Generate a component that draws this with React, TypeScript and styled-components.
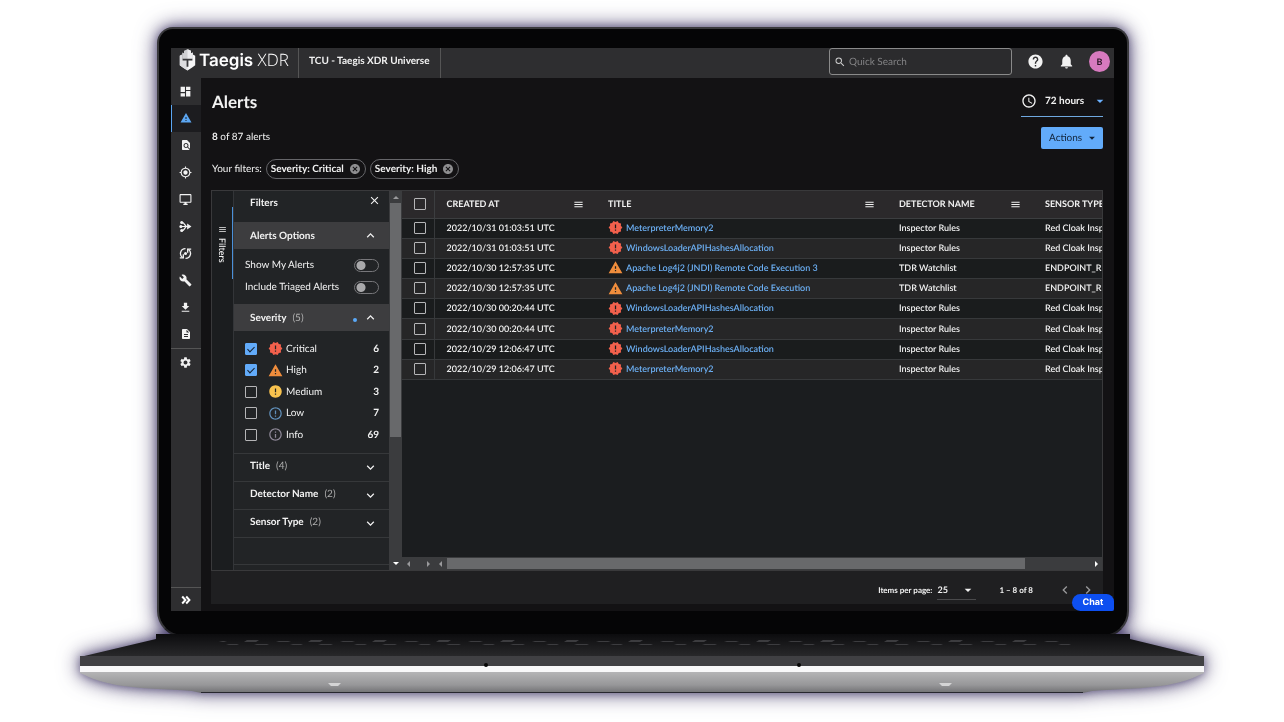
import React from 'react';
import styled, { createGlobalStyle, css } from 'styled-components';
import {
  MdDashboard, MdWarning, MdFindInPage, MdMyLocation, MdOutlineDesktopWindows, MdBuild,
  MdDescription, MdSettings, MdHelp, MdNotifications, MdSearch, MdAccessTime, MdArrowDropDown,
  MdCancel, MdNewReleases, MdError, MdErrorOutline, MdInfoOutline, MdClose, MdExpandLess,
  MdExpandMore, MdChevronLeft, MdChevronRight, MdFileDownload, MdMenu,
} from 'react-icons/md';

const Global = createGlobalStyle`
  * { box-sizing: border-box; }
  body {
    margin: 0;
    background: #fff;
    font-family: Lato, "Liberation Sans", sans-serif;
    text-rendering: geometricPrecision;
  }
  button, input, select { font-family: inherit; text-rendering: inherit; }
  button { border: 0; padding: 0; background: none; color: inherit; cursor: pointer; }
  svg { display: block; flex: none; }
`;

const Page = styled.main`padding: 27px 80px 28px;`;
const Laptop = styled.div`
  filter: drop-shadow(0 0 4px rgba(52, 42, 92, 0.5)) drop-shadow(0 0 10px rgba(52, 42, 92, 0.8));
`;
const Lid = styled.div`
  margin: 0 75px 0 77px;
  padding: 19px 13px 24px 12px;
  background: #050506;
  border: 2px solid #39393c;
  border-bottom-color: #232326;
  border-radius: 16px 16px 26px 26px;
`;
const Base = styled.svg`width: 100%; height: 59px; margin-top: -3px;`;
const Screen = styled.div`
  position: relative;
  display: flex;
  flex-direction: column;
  background: #131214;
  color: #f2f2f2;
  font-size: 10px;
  line-height: 14px;
`;

const TopBar = styled.header`
  display: flex;
  align-items: stretch;
  height: 30px;
  background: #2e2e30;
`;
const Brand = styled.a`
  display: flex;
  align-items: center;
  gap: 3px;
  width: 128px;
  padding: 0 0 6px 8px;
  border-right: 1px solid #555;
  color: #fff;
  text-decoration: none;
  font-size: 17px;
  font-weight: 600;
  font-family: Inter, sans-serif;
`;
const BrandThin = styled.span`font-weight: 300; font-family: "Open Sans", sans-serif;`;
const Tenant = styled.div`
  padding: 6px 10px;
  border-right: 1px solid #555;
  font-weight: 700;
`;
const SearchBox = styled.label`
  display: flex;
  align-items: center;
  gap: 3px;
  width: 183px;
  height: 27px;
  margin-left: auto;
  padding-left: 4px;
  border: 1px solid #8a8a8a;
  border-radius: 3px;
  color: #ccc;
  background: #2b2b2d;
`;
const SearchInput = styled.input`
  flex: 1;
  min-width: 0;
  border: 0;
  padding: 0;
  background: none;
  color: #eee;
  font-size: 10px;
  &::placeholder { color: #828284; opacity: 1; }
`;
const TopActions = styled.div`
  display: flex;
  align-items: center;
  gap: 14px;
  padding: 0 4px 3px 15px;
`;
const Avatar = styled.button`
  width: 21px;
  height: 21px;
  border-radius: 50%;
  background: #d77abf;
  color: #2a1525;
  font-size: 9px;
  font-weight: 700;
`;

const Body = styled.div`display: flex;`;
const Rail = styled.nav`
  display: flex;
  flex-direction: column;
  width: 30px;
  background: #2e2e30;
  color: #fff;
`;
const RailLink = styled.a<{ $active?: boolean }>`
  display: flex;
  align-items: center;
  justify-content: center;
  height: 27px;
  padding: 0 1px 1px 0;
  color: ${p => (p.$active ? '#5ba6f2' : '#f2f2f2')};
  ${p => p.$active && css`background: linear-gradient(90deg, #5ba6f2 1px, #1c1c1f 1px);`}
`;
const RailRule = styled.hr`width: 100%; margin: 0; border: 0; border-top: 1px solid #555;`;
const RailToggle = styled.button`
  display: flex;
  align-items: center;
  justify-content: center;
  height: 24px;
  margin-top: auto;
  border-top: 1px solid #555;
`;

const Content = styled.section`flex: 1; min-width: 0; padding: 0 11px 7px 10px;`;
const TitleRow = styled.div`display: flex; justify-content: space-between; height: 39px;`;
const Title = styled.h1`margin: 12px 0 0 1px; font-size: 17px; line-height: 24px;`;
const TimeRange = styled.button`
  display: flex;
  align-items: center;
  gap: 8px;
  width: 82px;
  padding: 8px 0 0;
  border-bottom: 1px solid #6fa8e0;
  font-size: 10px;
  font-weight: 700;
  white-space: nowrap;
  & > svg:last-child { margin-left: auto; color: #6bb1ff; }
`;
const CountRow = styled.div`
  display: flex;
  justify-content: space-between;
  align-items: flex-end;
  height: 32px;
  padding-left: 1px;
`;
const Count = styled.p`margin: 0; height: 19px;`;
const Actions = styled.button`
  display: flex;
  align-items: center;
  justify-content: space-between;
  width: 62px;
  height: 22px;
  padding: 0 4px 0 8px;
  border-radius: 2px;
  background: #62abfa;
  color: #12243a;
  font-size: 10px;
`;
const ChipRow = styled.div`
  display: flex;
  align-items: center;
  gap: 4px;
  height: 41px;
  padding: 0 0 2px 1px;
`;
const Chip = styled.span`
  display: flex;
  align-items: center;
  gap: 5px;
  height: 20px;
  padding: 0 4px;
  border: 1px solid #66666a;
  border-radius: 10px;
  font-weight: 700;
  button { color: #8e8e90; }
`;

const Panel = styled.div`
  display: flex;
  height: 381px;
  border: 1px solid #39393b;
  background: #1b1d1f;
`;
const SideTab = styled.button`
  display: flex;
  justify-content: flex-start;
  align-items: center;
  gap: 4px;
  writing-mode: vertical-rl;
  width: 22px;
  padding-top: 34px;
  border-right: 1px solid #333538;
  background: linear-gradient(#4a90d9, #4a90d9) right 16px / 1px 72px no-repeat;
  font-size: 9px;
  font-weight: 600;
`;
const Filters = styled.aside`width: 155px; background: #222426;`;
const FiltersHead = styled.div`
  display: flex;
  justify-content: space-between;
  height: 31px;
  padding: 5px 8px 0 16px;
  font-weight: 700;
  button { height: 10px; margin-top: -2px; }
`;
const Section = styled.button<{ $open?: boolean }>`
  display: flex;
  align-items: center;
  gap: 6px;
  width: 100%;
  height: ${p => (p.$open ? '27px' : '28px')};
  padding: 0 11px ${p => (p.$open ? '0' : '4px')} 16px;
  background: ${p => (p.$open ? '#3d3d3f' : '#222426')};
  border-top: ${p => (p.$open ? '0' : '1px solid #36383a')};
  font-size: 10px;
  font-weight: 700;
  & > svg { margin: ${p => (p.$open ? '0' : '4px')} 0 0 auto; }
`;
const Muted = styled.span`color: #b0b0b0; font-weight: 400;`;
const Dot = styled.i`
  width: 4px;
  height: 4px;
  margin: 5px 0 0 auto;
  border-radius: 50%;
  background: #5aa9f8;
  & + svg { margin-left: 0; }
`;
const Toggles = styled.div`height: 55px; padding: 5px 10px 0 11px;`;
const ToggleRow = styled.label`
  display: flex;
  align-items: center;
  justify-content: space-between;
  height: 22px;
`;
const Switch = styled.input`
  appearance: none;
  width: 25px;
  height: 13px;
  margin: 0;
  border: 1px solid #77777a;
  border-radius: 7px;
  background: radial-gradient(circle at 6px 50%, #a9a9ab 4px, transparent 5px);
`;
const SeverityList = styled.div`
  display: flex;
  flex-direction: column;
  justify-content: space-between;
  height: 122px;
  padding: 7px 10px 8px 11px;
`;
const SeverityRow = styled.label`
  display: flex;
  align-items: center;
  height: 21px;
  & > svg { margin: 0 3px 0 11px; }
  & > span { flex: 1; }
`;
const Check = styled.input`
  appearance: none;
  display: block;
  flex: none;
  width: 12px;
  height: 12px;
  margin: 0;
  border: 1px solid #b5b5b7;
  border-radius: 1px;
  &:checked {
    border-color: #62abfa;
    background: #62abfa;
  }
  &:checked::after {
    content: '';
    display: block;
    width: 3px;
    height: 6px;
    margin: 1px 0 0 3px;
    border: solid #14212f;
    border-width: 0 1px 1px 0;
    transform: rotate(45deg);
  }
`;
const EmptySection = styled.div`
  height: 28px;
  border: solid #36383a;
  border-width: 1px 0;
`;
const VScroll = styled.div`
  display: flex;
  flex-direction: column;
  align-items: center;
  width: 13px;
  padding: 5px 0;
  background: #3b3c3e;
`;
const VThumb = styled.div`width: 11px; height: 234px; margin: 4px 0 auto; background: #68696b;`;
const Arrow = styled.i<{ $dir: 'up' | 'down' | 'left' | 'right'; $dim?: boolean }>`
  border: 3px solid transparent;
  ${p => {
    const c = p.$dim ? '#9a9a9c' : '#fff';
    return {
      up: `border-top: 0; border-bottom-color: ${c};`,
      down: `border-bottom: 0; border-top-color: ${c};`,
      left: `border-left: 0; border-right-color: ${c};`,
      right: `border-right: 0; border-left-color: ${c};`,
    }[p.$dir];
  }}
`;

const Grid = styled.div`
  flex: 1;
  min-width: 0;
  display: flex;
  flex-direction: column;
  justify-content: space-between;
  overflow: hidden;
`;
const Table = styled.table`
  width: 100%;
  height: 189px;
  table-layout: fixed;
  border-collapse: collapse;
  text-align: left;
  white-space: nowrap;
  font-size: 9px;
`;
const Th = styled.th<{ $w?: number }>`
  width: ${p => (p.$w ? p.$w + 'px' : 'auto')};
  height: 27px;
  padding: 0 0 0 12px;
  background: #2b292b;
  border-bottom: 1px solid #3c3e40;
  font-weight: 700;
  overflow: hidden;
  &:first-child { border-right: 1px solid #3c3e40; }
`;
const ThInner = styled.div`
  display: flex;
  align-items: center;
  justify-content: space-between;
  padding-right: 12px;
`;
const Tr = styled.tr`
  background: #1a1c1d;
  &:nth-child(even) { background: #262627; }
`;
const Td = styled.td`
  padding: 0 0 1px 12px;
  border-bottom: 1px solid #37393b;
  overflow: hidden;
  font-weight: 600;
  &:first-child { border-right: 1px solid #37393b; }
`;
const AlertLink = styled.a`
  display: flex;
  align-items: center;
  gap: 3px;
  color: #6cb0f5;
  text-decoration: none;
`;
const HScroll = styled.div`
  display: flex;
  align-items: center;
  height: 13px;
  padding: 0 4px 0 5px;
  background: #3b3c3e;
`;
const HGap = styled.span<{ $w: number }>`width: ${p => p.$w}px;`;
const HTrack = styled.div`flex: 1; margin: 0 6px 0 5px;`;
const HThumb = styled.div`width: 90%; height: 11px; background: #68696b;`;

const Pager = styled.footer`
  display: flex;
  align-items: center;
  justify-content: flex-end;
  height: 33px;
  padding: 5px 7px 0 0;
  background: #1f1f21;
  font-size: 8px;
  font-weight: 700;
  & > label { margin-right: 5px; }
  button { color: #9a9a9c; margin-left: 7px; }
`;
const SelectWrap = styled.span`
  display: flex;
  align-items: center;
  width: 39px;
  height: 20px;
  margin-right: 23px;
  border-bottom: 1px solid #4a4a4c;
`;
const Select = styled.select`
  appearance: none;
  flex: 1;
  min-width: 0;
  border: 0;
  padding: 0;
  background: none;
  color: #f2f2f2;
  font-size: 9px;
  font-weight: 700;
`;
const Range = styled.span`margin-right: 17px;`;
const Chat = styled.button`
  position: absolute;
  right: 0;
  bottom: 0;
  width: 42px;
  height: 17px;
  border-radius: 9px 8px 2px 9px;
  background: #0d4ff0;
  color: #fff;
  font-family: Inter, sans-serif;
  font-size: 9px;
  font-weight: 700;
`;

function Helmet() {
  return (
    <svg width="17" height="22" viewBox="0 0 17 22" aria-hidden="true">
      <path d="M3.200 3.500 5 4.200V1.800L8.500.3 12 1.800v2.400l1.800-.7V10H3.200z" fill="#cfcfd2" />
      <path d="M8.500.3 12 1.800v2.400l1.800-.7V10H8.500z" fill="#ececee" />
      <path d="M.8 6.800 3.200 5.600V10h10.600V5.600l2.400 1.200v9.400l-3.400 2.500-4.300 2.900-4.300-2.900-3.400-2.500z" fill="#f6f6f7" />
      <path d="M.8 6.800 3.200 5.600V10h5.300v11.600l-4.300-2.900-3.400-2.500z" fill="#dcdcdf" />
      <path d="M3.600 9.800h9.800v1.700H9.400v6.300H7.600v-6.300h-4z" fill="#38383b" />
    </svg>
  );
}

function BranchIcon() {
  return (
    <svg width="13" height="13" viewBox="0 0 24 24" fill="currentColor" aria-hidden="true">
      <circle cx="5" cy="4.500" r="2.800" />
      <circle cx="3.500" cy="12" r="2.800" />
      <circle cx="5" cy="19.500" r="2.800" />
      <path d="M5 4.500c6 0 5 6.500 9 7.500-4 1-3 7.500-9 7.500M3.500 12H17" fill="none" stroke="currentColor" strokeWidth="2.200" />
      <path d="M15 6.500l8 5.500-8 5.500z" />
    </svg>
  );
}

function CycleIcon() {
  return (
    <svg width="13" height="13" viewBox="0 0 24 24" fill="none" stroke="currentColor" strokeWidth="2.400" aria-hidden="true">
      <path d="M6.500 19.300A9 9 0 0 1 12 3M17.500 4.700A9 9 0 0 1 12 21" />
      <path d="M1.500 20H8v-6.500M22.500 4H16v6.500" />
      <circle cx="12" cy="12" r="2.800" fill="currentColor" stroke="none" />
    </svg>
  );
}

function DoubleChevron() {
  return (
    <svg width="10" height="10" viewBox="0 0 10 10" fill="none" stroke="#fff" strokeWidth="2" aria-hidden="true">
      <path d="M1.200 1.500 4.400 5 1.200 8.500M5.200 1.500 8.400 5 5.200 8.500" />
    </svg>
  );
}

const railItems = [
  { label: 'Dashboard', icon: <MdDashboard size={13} /> },
  { label: 'Alerts', icon: <MdWarning size={12} />, active: true },
  { label: 'Search', icon: <MdFindInPage size={12} /> },
  { label: 'Detections', icon: <MdMyLocation size={13} /> },
  { label: 'Endpoints', icon: <MdOutlineDesktopWindows size={13} /> },
  { label: 'Integrations', icon: <BranchIcon /> },
  { label: 'Automations', icon: <CycleIcon /> },
  { label: 'Tools', icon: <MdBuild size={13} /> },
  { label: 'Downloads', icon: <MdFileDownload size={13} /> },
  { label: 'Reports', icon: <MdDescription size={12} /> },
];

const severities = [
  { name: 'Critical', count: 6, icon: <MdNewReleases size={15} color="#f2604c" />, on: true },
  { name: 'High', count: 2, icon: <MdWarning size={15} color="#f08d3c" />, on: true },
  { name: 'Medium', count: 3, icon: <MdError size={15} color="#f8c24e" /> },
  { name: 'Low', count: 7, icon: <MdErrorOutline size={15} color="#6190bb" /> },
  { name: 'Info', count: 69, icon: <MdInfoOutline size={15} color="#8d8796" /> },
];

type Alert = [string, string, boolean];
const alerts: Alert[] = [
  ['2022/10/31 01:03:51 UTC', 'MeterpreterMemory2', true],
  ['2022/10/31 01:03:51 UTC', 'WindowsLoaderAPIHashesAllocation', true],
  ['2022/10/30 12:57:35 UTC', 'Apache Log4j2 (JNDI) Remote Code Execution 3', false],
  ['2022/10/30 12:57:35 UTC', 'Apache Log4j2 (JNDI) Remote Code Execution', false],
  ['2022/10/30 00:20:44 UTC', 'WindowsLoaderAPIHashesAllocation', true],
  ['2022/10/30 00:20:44 UTC', 'MeterpreterMemory2', true],
  ['2022/10/29 12:06:47 UTC', 'WindowsLoaderAPIHashesAllocation', true],
  ['2022/10/29 12:06:47 UTC', 'MeterpreterMemory2', true],
];

function LaptopBase() {
  return (
    <Base viewBox="0 0 1124 59" preserveAspectRatio="none" aria-hidden="true">
      <defs>
        <linearGradient id="deck" x1="0" y1="0" x2="0" y2="1">
          <stop offset="0" stopColor="#0c0c0e" />
          <stop offset="1" stopColor="#29292b" />
        </linearGradient>
        <linearGradient id="belly" x1="0" y1="0" x2="0" y2="1">
          <stop offset="0" stopColor="#c2c2c3" />
          <stop offset="0.700" stopColor="#979799" />
          <stop offset="1" stopColor="#707073" />
        </linearGradient>
        <pattern id="keys" width="64" height="12" patternUnits="userSpaceOnUse">
          <path d="M4 8l3-1h12l-3 1zM18 11l3-1h10l-2 1zM36 8l3-2h12l-3 2zM46 11l3-1h12l-2 1z" fill="#3c3c3f" />
        </pattern>
      </defs>
      <path d="M76 0h974v5l74 18H0L76 5z" fill="url(#deck)" />
      <path d="M150 5h824l30 8H120z" fill="url(#keys)" />
      <path d="M0 22h1124v11H0z" fill="#404043" />
      <path d="M0 32h1124v7c-12 6-22 9-36 12-24 4-50 4-76 6l-9 2H121l-9-2c-26-2-52-2-76-6C22 48 12 45 0 39z" fill="url(#belly)" />
      <path d="M0 32h1124v6H0z" fill="#f8f8f9" />
      <path d="M121 58h882v1H121z" fill="#26262e" />
      <circle cx="406" cy="31" r="2" fill="#050505" />
      <circle cx="719" cy="31" r="2" fill="#050505" />
      <path d="M248 49h13l-3 3h-7zM859 49h13l-3 3h-7z" fill="#d4d4d5" />
    </Base>
  );
}

export default function App() {
  return (
    <>
      <Global />
      <Page>
        <Laptop>
          <Lid>
            <Screen>
              <TopBar>
                <Brand href="#"><Helmet /><span>Taegis <BrandThin>XDR</BrandThin></span></Brand>
                <Tenant>TCU - Taegis XDR Universe</Tenant>
                <SearchBox>
                  <MdSearch size={12} />
                  <SearchInput aria-label="Quick Search" placeholder="Quick Search" />
                </SearchBox>
                <TopActions>
                  <button aria-label="Help"><MdHelp size={17} /></button>
                  <button aria-label="Notifications"><MdNotifications size={17} /></button>
                  <Avatar>B</Avatar>
                </TopActions>
              </TopBar>
              <Body>
                <Rail>
                  {railItems.map(i => (
                    <RailLink key={i.label} href="#" aria-label={i.label} $active={i.active}>{i.icon}</RailLink>
                  ))}
                  <RailRule />
                  <RailLink href="#" aria-label="Settings"><MdSettings size={13} /></RailLink>
                  <RailToggle aria-label="Expand navigation"><DoubleChevron /></RailToggle>
                </Rail>
                <Content>
                  <TitleRow>
                    <Title>Alerts</Title>
                    <TimeRange><MdAccessTime size={16} />72 hours<MdArrowDropDown size={16} /></TimeRange>
                  </TitleRow>
                  <CountRow>
                    <Count><b>8</b> of 87 alerts</Count>
                    <Actions>Actions <MdArrowDropDown size={14} /></Actions>
                  </CountRow>
                  <ChipRow>
                    <span>Your filters:</span>
                    {['Critical', 'High'].map(s => (
                      <Chip key={s}>Severity: {s}<button aria-label={`Remove ${s}`}><MdCancel size={12} /></button></Chip>
                    ))}
                  </ChipRow>
                  <Panel>
                    <SideTab><MdMenu size={9} />Filters</SideTab>
                    <Filters>
                      <FiltersHead>Filters<button aria-label="Close filters"><MdClose size={13} /></button></FiltersHead>
                      <Section $open>Alerts Options<MdExpandLess size={15} /></Section>
                      <Toggles>
                        <ToggleRow>Show My Alerts<Switch type="checkbox" /></ToggleRow>
                        <ToggleRow>Include Triaged Alerts<Switch type="checkbox" /></ToggleRow>
                      </Toggles>
                      <Section $open>Severity <Muted>(5)</Muted><Dot /><MdExpandLess size={15} /></Section>
                      <SeverityList>
                        {severities.map(s => (
                          <SeverityRow key={s.name}>
                            <Check type="checkbox" defaultChecked={s.on} />
                            {s.icon}
                            <span>{s.name}</span>
                            <b>{s.count}</b>
                          </SeverityRow>
                        ))}
                      </SeverityList>
                      <Section>Title <Muted>(4)</Muted><MdExpandMore size={15} /></Section>
                      <Section>Detector Name <Muted>(2)</Muted><MdExpandMore size={15} /></Section>
                      <Section>Sensor Type <Muted>(2)</Muted><MdExpandMore size={15} /></Section>
                      <EmptySection />
                    </Filters>
                    <VScroll><Arrow $dir="up" $dim /><VThumb /><Arrow $dir="down" /></VScroll>
                    <Grid>
                      <Table>
                        <thead>
                          <tr>
                            <Th $w={32}><Check type="checkbox" aria-label="Select all alerts" /></Th>
                            <Th $w={162}><ThInner>CREATED AT<MdMenu size={11} /></ThInner></Th>
                            <Th><ThInner>TITLE<MdMenu size={11} /></ThInner></Th>
                            <Th $w={146}><ThInner>DETECTOR NAME<MdMenu size={11} /></ThInner></Th>
                            <Th $w={69}>SENSOR TYPE</Th>
                          </tr>
                        </thead>
                        <tbody>
                          {alerts.map(([time, title, critical], i) => (
                            <Tr key={i}>
                              <Td><Check type="checkbox" aria-label={`Select ${title}`} /></Td>
                              <Td>{time}</Td>
                              <Td>
                                <AlertLink href="#">
                                  {critical ? <MdNewReleases size={15} color="#f2604c" /> : <MdWarning size={15} color="#f08d3c" />}
                                  {title}
                                </AlertLink>
                              </Td>
                              <Td>{critical ? 'Inspector Rules' : 'TDR Watchlist'}</Td>
                              <Td>{critical ? 'Red Cloak Inspector' : 'ENDPOINT_REDCLOAK'}</Td>
                            </Tr>
                          ))}
                        </tbody>
                      </Table>
                      <HScroll>
                        <Arrow $dir="left" $dim /><HGap $w={17} /><Arrow $dir="right" $dim /><HGap $w={9} />
                        <Arrow $dir="left" $dim />
                        <HTrack><HThumb /></HTrack>
                        <Arrow $dir="right" />
                      </HScroll>
                    </Grid>
                  </Panel>
                  <Pager>
                    <label htmlFor="per-page">Items per page:</label>
                    <SelectWrap>
                      <Select id="per-page" defaultValue="25"><option>25</option></Select>
                      <MdArrowDropDown size={16} />
                    </SelectWrap>
                    <Range>1 – 8 of 8</Range>
                    <button aria-label="Previous page"><MdChevronLeft size={16} /></button>
                    <button aria-label="Next page"><MdChevronRight size={16} /></button>
                  </Pager>
                </Content>
              </Body>
              <Chat>Chat</Chat>
            </Screen>
          </Lid>
          <LaptopBase />
        </Laptop>
      </Page>
    </>
  );
}
